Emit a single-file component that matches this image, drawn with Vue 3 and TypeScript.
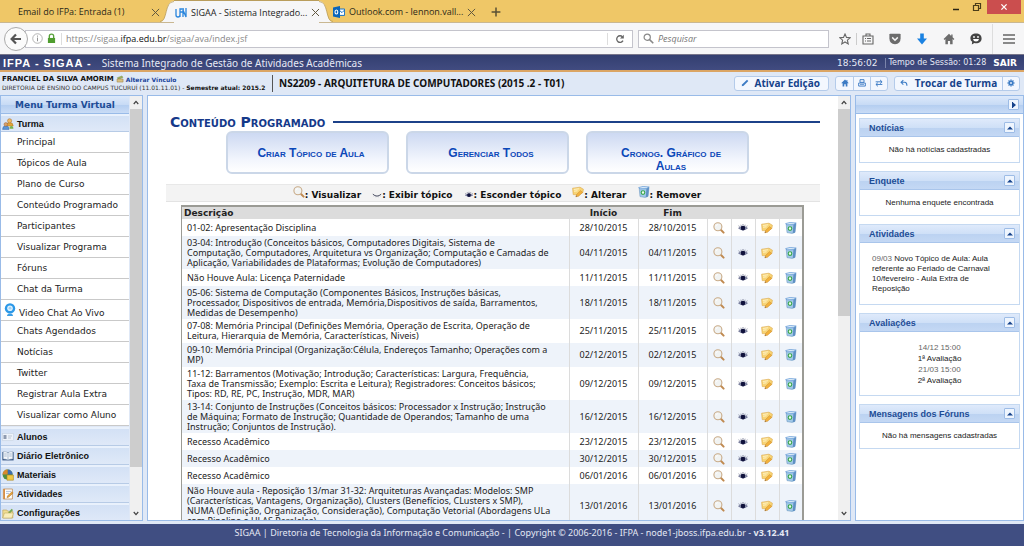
<script setup lang="ts">
import { ref } from 'vue'

interface Topic {
  lines: string[]
  date: string
}

const typedUrl = ref('')
const query = ref('')

const menuItems: { label: string; webcam?: boolean }[] = [
  { label: 'Principal' },
  { label: 'Tópicos de Aula' },
  { label: 'Plano de Curso' },
  { label: 'Conteúdo Programado' },
  { label: 'Participantes' },
  { label: 'Visualizar Programa' },
  { label: 'Fóruns' },
  { label: 'Chat da Turma' },
  { label: 'Video Chat Ao Vivo', webcam: true },
  { label: 'Chats Agendados' },
  { label: 'Notícias' },
  { label: 'Twitter' },
  { label: 'Registrar Aula Extra' },
  { label: 'Visualizar como Aluno' },
]

const sections = [
  { label: 'Alunos', icon: 'card' },
  { label: 'Diário Eletrônico', icon: 'book' },
  { label: 'Materiais', icon: 'ball' },
  { label: 'Atividades', icon: 'note' },
  { label: 'Configurações', icon: 'folder' },
]

const legend = [
  { icon: 'lens', label: ': Visualizar' },
  { icon: 'lash', label: ': Exibir tópico' },
  { icon: 'eye', label: ': Esconder tópico' },
  { icon: 'edit', label: ': Alterar' },
  { icon: 'bin', label: ': Remover' },
]

const rowActions = [
  { icon: 'lens', label: 'Visualizar' },
  { icon: 'eye', label: 'Esconder tópico' },
  { icon: 'edit', label: 'Alterar' },
  { icon: 'bin', label: 'Remover' },
]

const topics: Topic[] = [
  { lines: ['01-02: Apresentação Disciplina'], date: '28/10/2015' },
  {
    lines: [
      '03-04: Introdução (Conceitos básicos, Computadores Digitais, Sistema de',
      'Computação, Computadores, Arquitetura vs Organização; Computação e Camadas de',
      'Aplicação, Variabilidades de Plataformas; Evolução de Computadores)',
    ],
    date: '04/11/2015',
  },
  { lines: ['Não Houve Aula: Licença Paternidade'], date: '11/11/2015' },
  {
    lines: [
      '05-06: Sistema de Computação (Componentes Básicos, Instruções básicas,',
      'Processador, Dispositivos de entrada, Memória,Dispositivos de saída, Barramentos,',
      'Medidas de Desempenho)',
    ],
    date: '18/11/2015',
  },
  {
    lines: [
      '07-08: Memória Principal (Definições Memória, Operação de Escrita, Operação de',
      'Leitura, Hierarquia de Memória, Características, Niveis)',
    ],
    date: '25/11/2015',
  },
  {
    lines: [
      '09-10: Memória Principal (Organização:Célula, Endereços Tamanho; Operações com a',
      'MP)',
    ],
    date: '02/12/2015',
  },
  {
    lines: [
      '11-12: Barramentos (Motivação; Introdução; Características: Largura, Frequência,',
      'Taxa de Transmissão; Exemplo: Escrita e Leitura); Registradores: Conceitos básicos;',
      'Tipos: RD, RE, PC, Instrução, MDR, MAR)',
    ],
    date: '09/12/2015',
  },
  {
    lines: [
      '13-14: Conjunto de Instruções (Conceitos básicos: Processador x Instrução; Instrução',
      'de Máquina; Formato de Instrução; Quantidade de Operandos; Tamanho de uma',
      'Instrução; Conjuntos de Instrução).',
    ],
    date: '16/12/2015',
  },
  { lines: ['Recesso Acadêmico'], date: '23/12/2015' },
  { lines: ['Recesso Acadêmico'], date: '30/12/2015' },
  { lines: ['Recesso Acadêmico'], date: '06/01/2016' },
  {
    lines: [
      'Não Houve aula - Reposição 13/mar 31-32: Arquiteturas Avançadas: Modelos: SMP',
      '(Características, Vantagens, Organização), Clusters (Benefícios, CLusters x SMP),',
      'NUMA (Definição, Organização, Consideração), Computação Vetorial (Abordagens ULa',
      'com Pipeline e ULAS Paralelas)',
    ],
    date: '13/01/2016',
  },
]
</script>

<template>
  <svg class="defs" aria-hidden="true">
    <symbol id="close" viewBox="0 0 10 10">
      <path d="M1 1l8 8M9 1l-8 8" stroke="#5f563f" stroke-width="1.1" fill="none" />
    </symbol>
    <symbol id="up" viewBox="0 0 8 6"><path d="M1 5l3-3.4L7 5" stroke="#404040" stroke-width="1.6" fill="none" /></symbol>
    <symbol id="down" viewBox="0 0 8 6"><path d="M1 1l3 3.4L7 1" stroke="#404040" stroke-width="1.6" fill="none" /></symbol>
    <symbol id="lens" viewBox="0 0 12 12">
      <path d="M7.8 7.8l2.8 2.8" stroke="#c08a50" stroke-width="2" stroke-linecap="round" />
      <circle cx="4.9" cy="4.8" r="4" fill="#f1f3f2" stroke="#c9ab88" stroke-width="1.1" />
      <path d="M2.8 4.4a2.2 2.2 0 012-1.8" stroke="#fff" stroke-width="1" fill="none" />
    </symbol>
    <symbol id="eye" viewBox="0 0 12 12">
      <path d="M1.6 6.2Q6 2.6 10.4 6.2Q6 9.6 1.6 6.2z" fill="#aab0c8" stroke="#4a5078" stroke-width=".7" />
      <circle cx="6" cy="6.1" r="2.3" fill="#10123c" />
      <path d="M2.4 4.6L1.8 3.7M4.2 3.7L3.9 2.8M6 3.4v-1.2M7.8 3.7L8.1 2.8M9.6 4.6l.6-.9" stroke="#33395f" stroke-width=".7" />
    </symbol>
    <symbol id="lash" viewBox="0 0 12 12">
      <path d="M1 5Q6 9.6 11 5" fill="none" stroke="#3b3f55" stroke-width="1.1" />
      <path d="M3 6.4l-.8 1.2M5 7.4l-.3 1.3M7.2 7.4l.3 1.3M9.2 6.4l.7 1.1" stroke="#73778b" stroke-width=".6" />
    </symbol>
    <symbol id="edit" viewBox="0 0 12 12">
      <path d="M.6 2.2L8 1.2l3.4 2-.6 3.4-4.2 2.2L1.2 8.6z" fill="#f8d474" stroke="#dba848" stroke-width=".6" />
      <path d="M1.8 3.4l5.4-.6M2 5.2l3.6-.4" stroke="#fff3c8" stroke-width="1" />
      <path d="M3.8 10.8l1-2.6 3.8-3.6 2 1.8-4 3.8z" fill="#f3b23c" stroke="#c98a30" stroke-width=".5" />
      <path d="M3.8 10.8l.4-1.3 1 .8z" fill="#7b5a36" />
    </symbol>
    <symbol id="bin" viewBox="0 0 12 12">
      <path d="M1.2 2l9.8-.6-1 9-3 1-5-.8z" fill="#a3c9e8" stroke="#5b8ab8" stroke-width=".5" />
      <path d="M8.4 2.6l2.6-.8-1 8.6-2.2.8z" fill="#5f90c4" />
      <path d="M.6 1.6L5 .4l6.2.6-2.8 1.6L2 2.8z" fill="#d8eaf8" stroke="#4f8cd0" stroke-width=".6" />
      <circle cx="5" cy="6.6" r="1.8" fill="#f2faf0" stroke="#35a548" stroke-width="1.1" />
    </symbol>
    <symbol id="card" viewBox="0 0 12 12">
      <rect x=".5" y="2.5" width="11" height="7" fill="#eef3fa" stroke="#c6d2e2" stroke-width=".6" />
      <rect x="1.5" y="4" width="3" height="4" fill="#8f9bb0" /><path d="M6 5h4M6 7h3" stroke="#aab4c4" stroke-width=".7" />
    </symbol>
    <symbol id="book" viewBox="0 0 12 12">
      <path d="M.4 2h11.2v8.4H.4z" fill="#2b4d7c" />
      <path d="M1.2 1.6Q4 1.4 6 2.6q2-1.2 4.8-1v7.4Q8 9 6 10 4 9 1.2 9z" fill="#f5f8fb" stroke="#7e94b0" stroke-width=".5" />
      <path d="M6 2.6V10M2.2 4h2.6M2.2 6h2.6M7.2 4h2.6M7.2 6h2.6" stroke="#89a3c0" stroke-width=".7" />
    </symbol>
    <symbol id="ball" viewBox="0 0 12 12">
      <circle cx="5.6" cy="5.6" r="5" fill="#4d8f42" /><path d="M5.6.6a5 5 0 015 5H5.6z" fill="#3e6cad" />
      <path d="M.6 5.6h5V.6a5 5 0 00-5 5z" fill="#d8882e" /><path d="M5 6h6.4v5.2H5z" fill="#f0c944" stroke="#a88420" stroke-width=".6" />
    </symbol>
    <symbol id="note" viewBox="0 0 12 12">
      <path d="M1.4 1h9v10h-9z" fill="#fff" stroke="#c08d58" stroke-width=".8" /><path d="M1.4 1h1.6v10H1.4z" fill="#d98f45" />
      <path d="M4 3.4h5M4 5.4h3" stroke="#8fa6c9" stroke-width=".7" /><path d="M5 9.6l.6-1.8 4.4-4 1.2 1.1-4.4 4.2z" fill="#eba73c" stroke="#a56a22" stroke-width=".5" />
    </symbol>
    <symbol id="folder" viewBox="0 0 12 12">
      <path d="M.8 3h4l1 1.2h5V11H.8z" fill="#f0dd94" stroke="#b9a050" stroke-width=".6" />
      <path d="M6 6l3.6-4.2 1.4 1.2-3.6 4z" fill="#76a957" /><path d="M.8 11l1.6-5h9L10 11z" fill="#f9eebb" stroke="#b9a050" stroke-width=".5" />
    </symbol>
    <symbol id="people" viewBox="0 0 12 12">
      <path d="M4 8q0-3.4 3.6-3.4T11.2 8z" fill="#e2a63b" stroke="#af7420" stroke-width=".5" /><circle cx="7.6" cy="2.8" r="2.1" fill="#edb866" stroke="#a76d2c" stroke-width=".5" />
      <path d="M.6 11.4q0-3.6 3.2-3.6T7 11.4z" fill="#5b95d8" stroke="#3467a6" stroke-width=".5" /><circle cx="3.8" cy="6.4" r="1.8" fill="#d99f6a" stroke="#9b6636" stroke-width=".5" />
      <path d="M7.4 10.8q0-2.8 2-2.8t2 2.8z" fill="#79b24e" />
    </symbol>
    <symbol id="webcam" viewBox="0 0 12 14">
      <circle cx="6" cy="5.4" r="5.2" fill="#2b98e8" /><circle cx="6" cy="5.2" r="2.8" fill="#dff1fd" /><circle cx="6" cy="5.2" r="1.4" fill="#9ed0f5" />
      <path d="M3 13q0-2 3-2.4Q9 11 9 13z" fill="#3c9de4" />
    </symbol>
    <symbol id="house" viewBox="0 0 12 12"><path d="M6 .8L.6 6l.9.9L2.4 6v5.2h2.5V8h2.2v3.2h2.5V6l.9.9.9-.9-1.8-1.8V1.6H8.2v1.3z" fill="currentColor" /></symbol>
    <symbol id="printer" viewBox="0 0 12 12"><path d="M3 1h6v4H3zM1 6h10v4.6H1z" fill="none" stroke="currentColor" stroke-width="1.4" /><path d="M3 8h6v1H3z" fill="currentColor" /></symbol>
    <symbol id="swap" viewBox="0 0 12 12"><path d="M1 4.2h9.6M7.6 1.4l3 2.8-3 2.8M11 8.2H1.4M4.4 5.4l-3 2.8 3 2.8" fill="none" stroke="currentColor" stroke-width="1.4" /></symbol>
    <symbol id="back" viewBox="0 0 12 12"><path d="M5 1.6L1.6 5 5 8.4M2 5h5q3.4 0 3.4 5" fill="none" stroke="currentColor" stroke-width="1.6" /></symbol>
    <symbol id="gear" viewBox="0 0 12 12"><path d="M6 .8v10.4M.8 6h10.4M2.3 2.3l7.4 7.4M9.7 2.3l-7.4 7.4" stroke="currentColor" stroke-width="2" /><circle cx="6" cy="6" r="3.4" fill="currentColor" /><circle cx="6" cy="6" r="1.4" fill="#eef4fd" /></symbol>
    <symbol id="pencil" viewBox="0 0 12 12"><path d="M1 11l1-3L9 1l2 2-7 7z" fill="currentColor" /></symbol>
  </svg>

  <div class="window">
    <header class="tabs">
      <button class="tab first"><span>Email do IFPa: Entrada (1)</span><svg class="x"><use href="#close" /></svg></button>
      <svg class="curve" viewBox="0 0 14 22"><path d="M0 22C8 22 4 1 14 1V22z" fill="#f6f6f7" /><path d="M0 21.5C8 21.5 4 1.5 14 1.5" fill="none" stroke="#b99d5c" stroke-width=".8" /></svg>
      <button class="tab current">
        <svg class="fav" viewBox="0 0 12 12"><path d="M1 2v6q0 2 2 2t2-2V3M5 10V2h4M5 5h3M8 10V3l3 7V1" fill="none" stroke="#2a86dd" stroke-width="1.3" /></svg>
        <span>SIGAA - Sistema Integrado...</span><svg class="x"><use href="#close" /></svg>
      </button>
      <svg class="curve" viewBox="0 0 14 22"><path d="M14 22C6 22 10 1 0 1V22z" fill="#f6f6f7" /><path d="M14 21.5C6 21.5 10 1.5 0 1.5" fill="none" stroke="#b99d5c" stroke-width=".8" /></svg>
      <button class="tab last">
        <svg class="fav" viewBox="0 0 12 12"><path d="M6 3h5.6v6.4H6z" fill="#fff" stroke="#1470c4" /><path d="M6 4l3 2.6L11.6 4" fill="none" stroke="#1470c4" /><path d="M0 1.4L7 0v12L0 10.6z" fill="#0c66ba" /><ellipse cx="3.4" cy="6" rx="1.4" ry="2" fill="none" stroke="#fff" stroke-width="1.1" /></svg>
        <span>Outlook.com - lennon.vall...</span><svg class="x"><use href="#close" /></svg>
      </button>
      <button class="new" aria-label="Nova aba"><svg viewBox="0 0 10 10"><path d="M5 .6v8.8M.6 5h8.8" stroke="#5a5035" stroke-width="1.5" /></svg></button>
      <div class="wincontrols">
        <button aria-label="Minimizar"><svg viewBox="0 0 10 10"><path d="M2 7.5h6" stroke="#2a2415" stroke-width="1.5" /></svg></button>
        <button aria-label="Restaurar"><svg viewBox="0 0 10 10"><path d="M1.5 3.5h5v5h-5zM3.5 3.5v-2h5v5h-2" fill="none" stroke="#4b3d19" stroke-width="1.2" /></svg></button>
        <button class="quit" aria-label="Fechar"><svg viewBox="0 0 10 10"><path d="M2.4 2.4l5.2 5.2M7.6 2.4L2.4 7.6" stroke="#fff" stroke-width="1.3" /></svg></button>
      </div>
    </header>

    <nav class="toolbar">
      <button class="goback" aria-label="Voltar"><svg viewBox="0 0 12 12"><path d="M6 1.4L1.6 6 6 10.6M2 6h9" fill="none" stroke="#555" stroke-width="2.2" /></svg></button>
      <div class="url">
        <svg class="info" viewBox="0 0 12 12"><circle cx="6" cy="6" r="5.2" fill="none" stroke="#999" stroke-width=".8" /><path d="M6 5v4M6 2.8v1.2" stroke="#888" stroke-width="1" /></svg>
        <svg class="lock" viewBox="0 0 10 12"><path d="M2.6 6V3.6a2.4 2.4 0 014.8 0V6" fill="none" stroke="#57a03a" stroke-width="1.5" /><path d="M1 5.4h8V11H1z" fill="#4f9d2f" /></svg>
        <label class="address">
          <span v-if="!typedUrl" class="shown">https://sigaa.<b>ifpa.edu.br</b>/sigaa/ava/index.jsf</span>
          <input v-model="typedUrl" type="text" aria-label="Endereço" />
        </label>
        <button class="reload" aria-label="Recarregar"><svg viewBox="0 0 12 12"><path d="M9.6 8A4 4 0 119 3.4" fill="none" stroke="#666" stroke-width="1.6" /><path d="M10.6.8v4.6H6z" fill="#666" /></svg></button>
      </div>
      <div class="search">
        <svg viewBox="0 0 12 12"><circle cx="4.6" cy="4.6" r="3.4" fill="none" stroke="#888" stroke-width="1.3" /><path d="M7.2 7.2l4 4" stroke="#888" stroke-width="1.7" /></svg>
        <input v-model="query" type="text" placeholder="Pesquisar" aria-label="Pesquisar" />
      </div>
      <div class="tools">
        <button aria-label="Favoritos"><svg viewBox="0 0 12 12"><path d="M6 1l1.5 3.4 3.7.4-2.8 2.4.8 3.7L6 9l-3.2 1.9.8-3.7L.8 4.8l3.7-.4z" fill="none" stroke="#666" stroke-width="1.1" /></svg></button>
        <button aria-label="Lista de favoritos"><svg viewBox="0 0 12 12"><path d="M1 3h10v8H1zM4 3V1h4v2" fill="none" stroke="#666" stroke-width="1.1" /><path d="M3 5.5h1M5 5.5h4M3 8h1M5 8h4" stroke="#666" stroke-width="1.2" /></svg></button>
        <button aria-label="Pocket"><svg viewBox="0 0 12 12"><path d="M.4 1.6Q.4.8 1.4.8h9.2q1 0 1 .8v3.6q0 5.4-5.6 6Q.4 10.6.4 5.2z" fill="#6c6c6c" /><path d="M3.2 4.4L6 7.2l2.8-2.8" fill="none" stroke="#f6f6f6" stroke-width="1.5" /></svg></button>
        <button aria-label="Downloads"><svg viewBox="0 0 12 12"><path d="M4.2.6h3.6v5H11l-5 5.8-5-5.8h3.2z" fill="#1b82e2" /></svg></button>
        <button aria-label="Página inicial"><svg><use href="#house" /></svg></button>
        <button class="dark" aria-label="Conversas"><svg viewBox="0 0 12 12"><path d="M6 .6c3.4 0 5.6 2 5.6 4.8S9.4 10.2 6 10.2q-.8 0-1.6-.2l-2.6 1.6.4-2.8Q.4 7.6.4 5.4C.4 2.6 2.6.6 6 .6z" fill="currentColor" /><circle cx="4" cy="4" r=".9" fill="#fff" /><circle cx="8" cy="4" r=".9" fill="#fff" /><path d="M3 6h6Q8.6 8.6 6 8.6T3 6z" fill="#fff" /></svg></button>
        <button class="burger" aria-label="Menu"><svg viewBox="0 0 12 12"><path d="M0 2h12M0 6h12M0 10h12" stroke="#666" stroke-width="1.7" /></svg></button>
      </div>
    </nav>

    <div class="brand">
      <strong>IFPA - SIGAA -</strong>
      <span class="system">Sistema Integrado de Gestão de Atividades Acadêmicas</span>
      <time>18:56:02</time>
      <span class="session">Tempo de Sessão: 01:28</span>
      <a href="#sair">SAIR</a>
    </div>

    <div class="context">
      <div class="user">
        <div class="name">FRANCIEL DA SILVA AMORIM <svg viewBox="0 0 12 12"><path d="M2 4l7-2.6 1.4 2.4-7 2.6z" fill="#9fb35a" stroke="#6f8039" stroke-width=".6" /><path d="M1.6 6h9v4.6h-9z" fill="#d9c083" stroke="#94783a" stroke-width=".7" /></svg> <a href="#vinculo">Alterar Vínculo</a></div>
        <div class="unit">DIRETORIA DE ENSINO DO CAMPUS TUCURUÍ (11.01.11.01) - <b>Semestre atual: 2015.2</b></div>
      </div>
      <h1>NS2209 - ARQUITETURA DE COMPUTADORES (2015 .2 - T01)</h1>
      <button class="action"><svg><use href="#pencil" /></svg>Ativar Edição</button>
      <div class="group">
        <button aria-label="Início"><svg><use href="#house" /></svg></button>
        <button aria-label="Imprimir"><svg><use href="#printer" /></svg></button>
        <button aria-label="Alternar"><svg><use href="#swap" /></svg></button>
      </div>
      <div class="group">
        <button class="wide"><svg><use href="#back" /></svg>Trocar de Turma</button>
        <button aria-label="Opções"><svg><use href="#gear" /></svg></button>
      </div>
    </div>

    <div class="body">
      <aside class="panel left">
        <div class="sidebar">
          <h2>Menu Turma Virtual</h2>
          <button class="section open"><svg><use href="#people" /></svg>Turma</button>
          <ul>
            <li v-for="item in menuItems" :key="item.label" :class="{ cam: item.webcam }">
              <svg v-if="item.webcam"><use href="#webcam" /></svg><a :href="'#' + item.label">{{ item.label }}</a>
            </li>
          </ul>
          <button v-for="s in sections" :key="s.label" class="section"><svg><use :href="'#' + s.icon" /></svg>{{ s.label }}</button>
        </div>
        <div class="scroll">
          <svg><use href="#up" /></svg>
          <div class="track"><div class="thumb long"></div></div>
          <svg><use href="#down" /></svg>
        </div>
      </aside>

      <main class="panel center">
        <div class="content">
          <div class="title"><h2>Conteúdo Programado</h2><hr /></div>
          <div class="cards">
            <button>Criar Tópico de Aula</button>
            <button>Gerenciar Todos</button>
            <button>Cronog. Gráfico de Aulas</button>
          </div>
          <div class="legend">
            <span v-for="l in legend" :key="l.icon"><svg :class="l.icon"><use :href="'#' + l.icon" /></svg>{{ l.label }}</span>
          </div>
          <table>
            <thead>
              <tr><th class="desc">Descrição</th><th class="day">Início</th><th class="day">Fim</th><th class="act"></th><th class="act"></th><th class="act"></th><th class="act"></th></tr>
            </thead>
            <tbody>
              <tr v-for="(t, i) in topics" :key="i" :class="'rows' + t.lines.length">
                <td class="text"><div v-for="line in t.lines" :key="line">{{ line }}</div></td>
                <td>{{ t.date }}</td>
                <td>{{ t.date }}</td>
                <td v-for="a in rowActions" :key="a.icon"><button :aria-label="a.label"><svg><use :href="'#' + a.icon" /></svg></button></td>
              </tr>
            </tbody>
          </table>
        </div>
        <div class="scroll">
          <svg><use href="#up" /></svg>
          <div class="track"><div class="thumb half"></div></div>
          <svg><use href="#down" /></svg>
        </div>
      </main>

      <aside class="panel right">
        <div class="bar"><button aria-label="Recolher"><svg viewBox="0 0 8 8"><path d="M3 1.5L6 4 3 6.500z" fill="#15428b" /><path d="M2.5 1v6" stroke="#15428b" stroke-width="1" /></svg></button></div>
        <div class="widgets">
          <section class="widget">
            <h3>Notícias<button aria-label="Recolher Notícias"><svg viewBox="0 0 8 8"><path d="M1 5.5l3-3 3 3z" fill="#15428b" /></svg></button></h3>
            <p>Não há notícias cadastradas</p>
          </section>
          <section class="widget">
            <h3>Enquete<button aria-label="Recolher Enquete"><svg viewBox="0 0 8 8"><path d="M1 5.5l3-3 3 3z" fill="#15428b" /></svg></button></h3>
            <p>Nenhuma enquete encontrada</p>
          </section>
          <section class="widget">
            <h3>Atividades<button aria-label="Recolher Atividades"><svg viewBox="0 0 8 8"><path d="M1 5.5l3-3 3 3z" fill="#15428b" /></svg></button></h3>
            <div class="news"><span class="soft">09/03</span> Novo Tópico de Aula: Aula<br />referente ao Feriado de Carnaval<br />10/fevereiro - Aula Extra de<br />Reposição</div>
          </section>
          <section class="widget">
            <h3>Avaliações<button aria-label="Recolher Avaliações"><svg viewBox="0 0 8 8"><path d="M1 5.5l3-3 3 3z" fill="#15428b" /></svg></button></h3>
            <div class="exams"><span class="soft">14/12 15:00</span><br />1ª Avaliação<br /><span class="soft">21/03 15:00</span><br />2ª Avaliação</div>
          </section>
          <section class="widget">
            <h3>Mensagens dos Fóruns<button aria-label="Recolher Mensagens dos Fóruns"><svg viewBox="0 0 8 8"><path d="M1 5.5l3-3 3 3z" fill="#15428b" /></svg></button></h3>
            <p>Não há mensagens cadastradas</p>
          </section>
        </div>
      </aside>
    </div>

    <footer>SIGAA | Diretoria de Tecnologia da Informação e Comunicação - | Copyright © 2006-2016 - IFPA - node1-jboss.ifpa.edu.br - <b>v3.12.41</b></footer>
  </div>
</template>

<style>
body { margin: 0; overflow: hidden; }
</style>

<style scoped>
.defs { position: absolute; width: 0; height: 0; }
.window, .window * { box-sizing: border-box; }
.window { display: flex; flex-direction: column; height: 100vh; background: #dfe8f6; font: 8px/10px "DejaVu Sans", sans-serif; color: #222; }
button { font: inherit; color: inherit; background: none; border: 0; padding: 0; margin: 0; display: flex; align-items: center; }
input { border: 0; background: none; padding: 0; outline: 0; font: inherit; width: 100%; min-width: 0; }
a { color: inherit; text-decoration: none; }
svg { display: block; flex: none; }
h1, h2, h3, p, ul { margin: 0; padding: 0; }

.tabs { display: flex; height: 23px; background: #efc767; border-bottom: 1px solid #c9b791; font: 9px/12px "Open Sans", sans-serif; color: #2c2718; }
.tab { white-space: nowrap; gap: 4px; padding-top: 2px; }
.tab span { flex: 1; text-align: left; }
.tab .x { width: 9px; height: 9px; }
.first { width: 160px; padding-left: 18px; }
.curve { width: 14px; height: 22px; }
.current { width: 145px; height: 23px; background: #f6f6f7; border-top: 1px solid #b99d5c; color: #222; padding-left: 1px; padding-top: 1px; }
.fav { width: 12px; height: 12px; }
.last { width: 142px; }
.new { padding: 2px 16px 0; }
.new svg { width: 10px; height: 10px; }
.wincontrols { margin-left: auto; display: flex; height: 14px; padding-right: 3px; gap: 11px; }
.wincontrols svg { width: 10px; height: 10px; }
.wincontrols .quit { background: #cb4e4e; width: 34px; justify-content: center; margin-left: -6px; }

.toolbar { display: flex; align-items: center; height: 31px; background: #f6f6f7; padding: 0 9px 0 4px; font: 9px/12px "Open Sans", sans-serif; }
.goback { width: 24px; height: 24px; border: 1px solid #aaa; border-radius: 50%; background: #fbfbfb; justify-content: center; z-index: 1; }
.goback svg { width: 12px; height: 12px; }
.url { display: flex; align-items: center; flex: 3 1 0; height: 18px; margin-left: -3px; border: 1px solid #c4c4cc; background: #fff; padding-left: 6px; }
.info { width: 11px; height: 11px; margin-right: 4px; }
.lock { width: 9px; height: 11px; }
.address { position: relative; display: flex; align-items: center; flex: 1; margin-left: 5px; padding-left: 4px; border-left: 1px solid #ddd; height: 12px; }
.shown { position: absolute; left: 4px; color: #888; pointer-events: none; }
.shown b { font-weight: 400; color: #111; }
.reload { width: 25px; height: 12px; border-left: 1px solid #ddd; justify-content: center; }
.reload svg { width: 10px; height: 10px; }
.search { display: flex; align-items: center; gap: 4px; width: 191px; height: 18px; margin-left: 5px; border: 1px solid #c4c4cc; background: #fff; padding-left: 4px; }
.search svg { width: 11px; height: 11px; }
.search input { font-style: italic; }
.search input::placeholder { color: #777; opacity: 1; }
.tools { display: flex; align-items: center; margin-left: 10px; gap: 15px; color: #6c6c6c; }
.tools svg { width: 12px; height: 12px; }
.tools button:first-child { margin-right: -10px; padding-right: 5px; border-right: 1px solid #ccc; }
.tools .dark { color: #444; }
.tools .burger { border-left: 1px solid #ddd; height: 30px; padding-left: 10px; margin-left: -5px; }

.brand { display: flex; align-items: center; height: 18px; border-top: 1px solid #77758a; border-bottom: 2px solid #dba564; background: linear-gradient(#333f70, #414b80); color: #e6e9f5; padding: 0 7px 0 3px; }
.brand strong { font: bold 11px/14px "Liberation Sans", sans-serif; letter-spacing: 1px; color: #fff; }
.system { font: 10px/14px "Noto Sans", sans-serif; margin-left: 10px; }
.brand time { margin-left: auto; font-size: 9px; }
.session { border-left: 1px solid #7b84ab; margin-left: 7px; padding-left: 3px; }
.brand a { margin-left: 7px; font-weight: bold; font-size: 9px; color: #fff; }

.context { display: flex; align-items: center; height: 22px; padding-right: 4px; gap: 6px; background: #dfe8f6; color: #15428b; }
.user { border-right: 1px solid #555; padding: 0 2px; height: 17px; width: 273px; white-space: nowrap; color: #111; }
.name { display: flex; align-items: center; gap: 2px; font: bold 7px/9px "DejaVu Sans", sans-serif; }
.name svg { width: 8px; height: 8px; }
.name a { color: #1b459c; font-size: 6px; }
.unit { font-size: 6px; line-height: 8px; color: #333; }
.unit b { color: #111; }
.context h1 { flex: 1; font: bold 10px/12px "Noto Sans", sans-serif; color: #111; white-space: nowrap; }
.context button { font: bold 10px/12px "Open Sans", sans-serif; white-space: nowrap; color: #15428b; }
.context button svg { width: 8px; height: 8px; color: #3c7bc4; }
.action, .group { height: 15px; border: 1px solid #b4cbea; border-radius: 3px; background: #f3f7fe; }
.context .action { border: 1px solid #b4cbea; background: #f3f7fe; padding: 0 8px 0 6px; gap: 5px; }
.group { display: flex; }
.group button { width: 17px; justify-content: center; }
.group button + button { border-left: 1px solid #b4cbea; }
.group .wide { width: 107px; gap: 7px; }

.body { flex: 1; min-height: 0; display: flex; gap: 4px; padding: 1px 0 3px; }
.panel { border: 1px solid #99bbe8; background: #fff; overflow: hidden; display: flex; }
.left { width: 143px; flex: none; }
.center { flex: 1; min-width: 0; }
.right { width: 169px; flex: none; flex-direction: column; }
.scroll { width: 12px; flex: none; background: #f0f0f0; display: flex; flex-direction: column; align-items: center; }
.scroll svg { width: 6px; height: 5px; margin: 4px 0; }
.track { flex: 1; align-self: stretch; }
.thumb { background: #cdcdcd; }
.long { height: 90%; }
.half { height: 52%; }

.sidebar { flex: 1; min-width: 0; overflow: hidden; padding-right: 1px; background: #dfe8f6; }
.sidebar h2 { height: 18px; font: bold 9px/18px "DejaVu Sans", sans-serif; text-align: center; color: #1d4c96; background: linear-gradient(#dce9fb, #c8dbf5 50%, #b3cdf0 51%, #c9dcf6); border-bottom: 1px solid #99bbe8; white-space: nowrap; }
.section { width: 100%; height: 19px; gap: 3px; padding-left: 1px; background: linear-gradient(#d3e1f5, #dfe9f8); border-top: 2px solid #e9f1fc; border-bottom: 1px solid #b7cbe6; font: bold 9px/12px "Liberation Sans", sans-serif; color: #111; }
.section svg { width: 12px; height: 12px; }
.open { height: 18px; }
.sidebar ul { list-style: none; background: #fff; margin-bottom: 1px; }
.sidebar li { height: 21px; display: flex; align-items: center; border-bottom: 1px solid #c9c9c9; padding-left: 16px; font-size: 9px; white-space: nowrap; }
.sidebar li.cam { padding-left: 3px; gap: 3px; }
.cam svg { width: 12px; height: 14px; }
.cam a { padding-top: 5px; }

.content { flex: 1; min-width: 0; overflow: hidden; padding: 19px 18px 0 18px; }
.title { display: flex; align-items: center; gap: 8px; padding-left: 4px; height: 14px; }
.title h2 { font: bold 14px/14px "DejaVu Sans", sans-serif; font-variant: small-caps; color: #15398a; white-space: nowrap; }
.title hr { flex: 1; height: 2px; border: 0; margin: 0; background: #1c4189; }
.cards { display: flex; justify-content: center; gap: 17px; margin-top: 2px; padding-right: 12px; }
.cards button { width: 163px; height: 43px; align-items: flex-start; justify-content: center; padding: 14px 14px 0 22px; border: 2px solid #cbd7e8; border-radius: 6px; background: linear-gradient(#cdd9f2, #f3f6fd 70%, #fff); font: bold 12px/13px "Liberation Sans", sans-serif; font-variant: small-caps; color: #0b47b8; text-align: center; }
.legend { display: flex; justify-content: center; gap: 11px; height: 18px; margin-top: 10px; padding-left: 8px; background: #f3f3f3; border-bottom: 1px solid #e3e3e3; border-top: 1px solid #e8e8e8; font: bold 9px/12px "DejaVu Sans", sans-serif; color: #111; white-space: nowrap; }
.legend span { display: flex; align-items: center; padding-top: 4px; }
.legend svg { width: 12px; height: 12px; margin-bottom: 7px; }
.legend svg.eye, .legend svg.lash { width: 10px; height: 10px; margin-bottom: 0; }

table { width: calc(100% - 31px); margin: 3px 0 0 15px; border: 2px solid #9b9b95; border-left-width: 1px; border-collapse: collapse; table-layout: fixed; }
th { height: 13px; padding: 0; background: #dcdcdc; font: bold 9px/12px "DejaVu Sans", sans-serif; color: #222; }
.desc { text-align: left; padding-left: 2px; }
.day { width: 69px; }
.act { width: 24px; }
td { padding: 0; text-align: center; border-right: 1px solid #dcdcdc; color: #222; font: 9px/10px "Noto Sans", sans-serif; }
td.text { text-align: left; padding-left: 5px; white-space: nowrap; }
td svg { width: 12px; height: 12px; }
td button { margin: 0 auto; }
tbody tr:nth-child(even) { background: #eef3fa; }
.rows1 { height: 17px; }
.rows2 { height: 24px; }
.rows3 { height: 33px; }
.rows4 { height: 44px; }

.bar { height: 18px; flex: none; display: flex; align-items: center; justify-content: flex-end; padding-right: 4px; background: linear-gradient(#dce9fb, #c8dbf5 50%, #b3cdf0 51%, #c9dcf6); border-bottom: 1px solid #99bbe8; }
.bar button, h3 button { width: 11px; height: 11px; background: #eef5fe; border: 1px solid #9dbce6; justify-content: center; border-radius: 1px; }
.bar svg, h3 svg { width: 8px; height: 8px; }
.widgets { display: flex; flex-direction: column; gap: 8px; padding: 4px 3px; font: 8px/11px "Liberation Sans", sans-serif; color: #222; }
.widget { border: 1px solid #c5d9f1; }
h3 { display: flex; justify-content: space-between; align-items: center; height: 18px; padding: 0 4px 0 9px; font: bold 9px/12px "Liberation Sans", sans-serif; color: #1d4c96; background: linear-gradient(#dfeafb, #cfe0f7 50%, #bbd2f1 51%, #c4d8f4); border-bottom: 1px solid #a9c5eb; white-space: nowrap; }
.widget p { text-align: center; padding: 7px 0; }
.news { line-height: 10px; padding: 11px 0 10px 12px; white-space: nowrap; }
.exams { text-align: center; padding: 10px 0 9px; }
.soft { color: #666; }

footer { height: 22px; padding-top: 3px; text-align: center; font: 9px/11px "Noto Sans", sans-serif; background: #404e82; color: #e4e8f4; white-space: nowrap; }
</style>
